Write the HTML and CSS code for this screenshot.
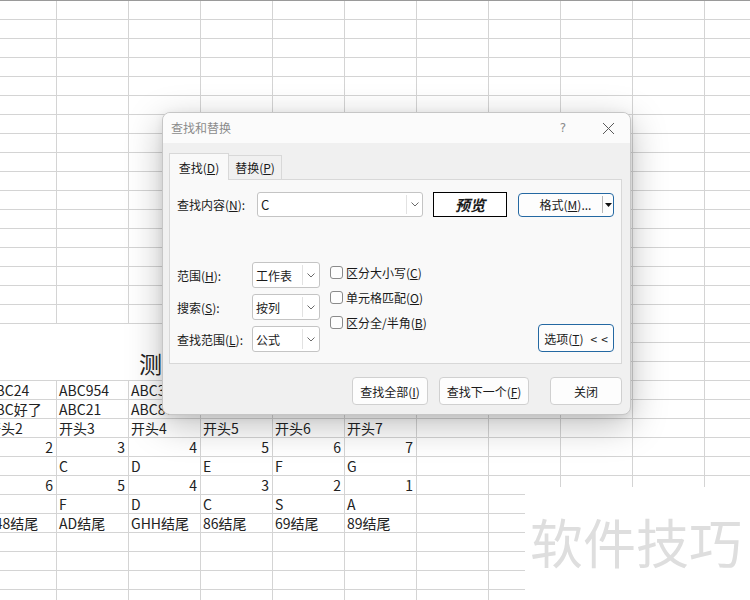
FILE: index.html
```html
<!DOCTYPE html>
<html lang="zh-CN">
<head>
<meta charset="utf-8">
<title>查找和替换</title>
<link rel="stylesheet" href="styles.css">
</head>
<body>
<div class="sheet">
  <div class="title-cell">测试数据表格</div>
  <div class="row"><div class="c first">ABC24</div><div class="c">ABC954</div><div class="c">ABC312</div><div class="c">ABC45</div><div class="c">ABC6</div><div class="c">ABC78</div></div>
  <div class="row"><div class="c first">ABC好了</div><div class="c">ABC21</div><div class="c">ABC876</div><div class="c">ABC5</div><div class="c">ABC99</div><div class="c">ABC1</div></div>
  <div class="row"><div class="c first">开头2</div><div class="c">开头3</div><div class="c">开头4</div><div class="c">开头5</div><div class="c">开头6</div><div class="c">开头7</div></div>
  <div class="row"><div class="c first n">2</div><div class="c n">3</div><div class="c n">4</div><div class="c n">5</div><div class="c n">6</div><div class="c n">7</div></div>
  <div class="row"><div class="c first">B</div><div class="c">C</div><div class="c">D</div><div class="c">E</div><div class="c">F</div><div class="c">G</div></div>
  <div class="row"><div class="c first n">6</div><div class="c n">5</div><div class="c n">4</div><div class="c n">3</div><div class="c n">2</div><div class="c n">1</div></div>
  <div class="row"><div class="c first">G</div><div class="c">F</div><div class="c">D</div><div class="c">C</div><div class="c">S</div><div class="c">A</div></div>
  <div class="row"><div class="c first">148结尾</div><div class="c">AD结尾</div><div class="c">GHH结尾</div><div class="c">86结尾</div><div class="c">69结尾</div><div class="c">89结尾</div></div>

  <div class="watermark">软件技巧</div>

  <div class="dialog">
    <div class="titlebar">
      <span class="title">查找和替换</span>
      <span class="help">?</span>
      <svg class="close" width="18" height="18" viewBox="0 0 18 18"><path d="M4 4 L15 15 M15 4 L4 15" stroke="#5a5a5a" stroke-width="1" fill="none"/></svg>
    </div>
    <div class="dbody">
      <div class="tabs">
        <div class="tab active">查找(<u>D</u>)</div>
        <div class="tab">替换(<u>P</u>)</div>
      </div>
      <div class="panel">
        <div class="find-row">
          <span class="lbl-find">查找内容(<u>N</u>):</span>
          <div class="combo input">
            <span class="val">C</span>
            <span class="arrow"><svg width="8" height="5" viewBox="0 0 8 5"><polyline points="0.5,0.5 4,4 7.5,0.5" fill="none" stroke="#6a6a6a" stroke-width="1"/></svg></span>
          </div>
          <div class="preview">预览</div>
          <div class="btn accent split">
            <span class="split-label">格式(<u>M</u>)...</span>
            <span class="split-sep"></span>
            <span class="split-drop"><svg width="7" height="4" viewBox="0 0 7 4"><polygon points="0,0 7,0 3.5,4" fill="#111"/></svg></span>
          </div>
        </div>
        <div class="opts">
          <div class="fields">
            <span class="lbl">范围(<u>H</u>):</span>
            <div class="combo sel"><span class="val">工作表</span><span class="arrow"><svg width="8" height="5" viewBox="0 0 8 5"><polyline points="0.5,0.5 4,4 7.5,0.5" fill="none" stroke="#6a6a6a" stroke-width="1"/></svg></span></div>
            <span class="lbl">搜索(<u>S</u>):</span>
            <div class="combo sel"><span class="val">按列</span><span class="arrow"><svg width="8" height="5" viewBox="0 0 8 5"><polyline points="0.5,0.5 4,4 7.5,0.5" fill="none" stroke="#6a6a6a" stroke-width="1"/></svg></span></div>
            <span class="lbl">查找范围(<u>L</u>):</span>
            <div class="combo sel"><span class="val">公式</span><span class="arrow"><svg width="8" height="5" viewBox="0 0 8 5"><polyline points="0.5,0.5 4,4 7.5,0.5" fill="none" stroke="#6a6a6a" stroke-width="1"/></svg></span></div>
          </div>
          <div class="checks">
            <div class="check"><span class="cb"></span>区分大小写(<u>C</u>)</div>
            <div class="check"><span class="cb"></span>单元格匹配(<u>O</u>)</div>
            <div class="check"><span class="cb"></span>区分全/半角(<u>B</u>)</div>
          </div>
          <div class="btn accent options">选项(<u>T</u>)<span class="chev">&lt;</span><span class="chev">&lt;</span></div>
        </div>
      </div>
      <div class="actions">
        <div class="btn b-all">查找全部(<u>I</u>)</div>
        <div class="btn b-next">查找下一个(<u>F</u>)</div>
        <div class="btn b-close">关闭</div>
      </div>
    </div>
  </div>
</div>
</body>
</html>
```

FILE: styles.css
```css
html, body {
  margin: 0;
  padding: 0;
  background: #fff;
}

.sheet {
  position: relative;
  width: 750px;
  height: 600px;
  overflow: hidden;
  background-color: #fff;
  background-image:
    linear-gradient(#9a9a9a, #9a9a9a),
    linear-gradient(to right, #d4d4d4 1px, transparent 1px),
    linear-gradient(to bottom, #d4d4d4 1px, transparent 1px);
  background-size: 100% 1px, 72px 100%, 100% 19px;
  background-position: 0 0, 56px 0, 0 0;
  background-repeat: no-repeat, repeat-x, repeat-y;
  font-family: "Noto Sans CJK SC", "Noto Sans", sans-serif;
  font-size: 14px;
  color: #222;
}

.title-cell {
  margin-top: 324px;
  width: 416px;
  height: 56px;
  box-sizing: border-box;
  background: #fff;
  display: flex;
  align-items: flex-end;
  justify-content: center;
  padding-bottom: 5px;
  font-size: 23px;
  line-height: 1;
  color: #222;
  white-space: nowrap;
}

.row {
  display: flex;
  height: 19px;
}

.c {
  flex: none;
  width: 72px;
  box-sizing: border-box;
  padding: 2px 3px 0;
  line-height: 17px;
  white-space: nowrap;
  overflow: hidden;
}

.c.first {
  margin-left: -16px;
}

.c.n {
  text-align: right;
}

.watermark {
  position: absolute;
  left: 525px;
  top: 487px;
  right: 0;
  bottom: 0;
  background: #fff;
  box-sizing: border-box;
  padding: 28px 0 0 5px;
  font-size: 53px;
  line-height: 1;
  color: #dedede;
  white-space: nowrap;
}

/* dialog */
.dialog {
  position: absolute;
  left: 162px;
  top: 112px;
  width: 469px;
  height: 303px;
  box-sizing: border-box;
  border: 1px solid #c6c6c6;
  border-radius: 8px;
  background: #f0f0f0;
  box-shadow: 0 10px 36px rgba(0, 0, 0, 0.26), 0 2px 8px rgba(0, 0, 0, 0.08);
  overflow: hidden;
  font-family: "Noto Sans CJK SC", "Noto Sans", sans-serif;
  font-size: 12px;
  color: #1a1a1a;
}

.titlebar {
  height: 30px;
  background: #fbfbfb;
  display: flex;
  align-items: center;
  padding: 0 13px 1px 8px;
  box-sizing: border-box;
}

.title {
  color: #8b8b8b;
}

.help {
  margin-left: auto;
  width: 20px;
  text-align: center;
  color: #8a8a8a;
  font-family: "DejaVu Sans", sans-serif;
  font-size: 12px;
}

.close {
  margin-left: 26px;
  display: block;
}

.dbody {
  padding: 10px 8px 0 6px;
}

u {
  text-underline-offset: 1px;
}

.tabs {
  display: flex;
  align-items: flex-end;
  height: 26px;
}

.tab {
  box-sizing: border-box;
  display: flex;
  align-items: center;
  justify-content: center;
  border: 1px solid #d8d8d8;
  border-bottom: none;
}

.tab.active {
  width: 60px;
  height: 27px;
  margin-bottom: -1px;
  background: #f9f9f9;
  position: relative;
  z-index: 1;
}

.tab:not(.active) {
  width: 53px;
  height: 24px;
  border-left: none;
  background: #f0f0f0;
}

.panel {
  height: 185px;
  box-sizing: border-box;
  border: 1px solid #d8d8d8;
  background: #f9f9f9;
  padding: 12px 7px 0 7px;
}

.find-row {
  display: flex;
  align-items: center;
  height: 25px;
}

.lbl-find {
  width: 80px;
  flex: none;
}

.combo {
  display: flex;
  box-sizing: border-box;
  background: #fff;
  border: 1px solid #c4c4c4;
  border-radius: 3px;
  flex: none;
}

.combo .val {
  flex: 1;
  display: flex;
  align-items: center;
  padding-left: 3px;
  white-space: nowrap;
}

.combo .arrow {
  display: flex;
  align-items: center;
  justify-content: center;
  border-left: 1px solid #e2e2e2;
  margin: 2px 0;
}

.combo.input {
  width: 166px;
  height: 25px;
}

.combo.input .val {
  font-size: 13px;
}

.combo.input .arrow {
  width: 15px;
}

.combo.sel {
  width: 68px;
  height: 26px;
}

.combo.sel .arrow {
  width: 16px;
}

.preview {
  margin-left: 10px;
  width: 74px;
  height: 25px;
  box-sizing: border-box;
  border: 1px solid #000;
  background: #fff;
  display: flex;
  align-items: center;
  justify-content: center;
  font-size: 15px;
  font-weight: bold;
  font-style: italic;
  flex: none;
}

.btn {
  box-sizing: border-box;
  height: 28px;
  border: 1px solid #d0d0d0;
  border-radius: 4px;
  background: #fdfdfd;
  display: flex;
  align-items: center;
  justify-content: center;
  white-space: nowrap;
  flex: none;
}

.btn.accent {
  border-color: #2468a2;
}

.split {
  margin-left: 11px;
  width: 96px;
  height: 24px;
  justify-content: flex-start;
}

.split-label {
  width: 83px;
  box-sizing: border-box;
  padding-left: 10px;
  text-align: center;
}

.split-sep {
  width: 1px;
  height: 17px;
  background: #b8b8b8;
}

.split-drop {
  flex: 1;
  display: flex;
  align-items: center;
  justify-content: center;
}

.opts {
  margin-top: 45px;
  display: flex;
  align-items: flex-start;
}

.fields {
  display: grid;
  grid-template-columns: 75px 68px;
  grid-auto-rows: 26px;
  row-gap: 6px;
  align-items: center;
}

.checks {
  margin-left: 10px;
  margin-top: -2px;
  display: flex;
  flex-direction: column;
}

.check {
  height: 25px;
  display: flex;
  align-items: center;
  white-space: nowrap;
}

.cb {
  width: 13px;
  height: 13px;
  box-sizing: border-box;
  border: 1px solid #8a8a8a;
  border-radius: 3px;
  background: #fdfdfd;
  margin-right: 3px;
}

.options {
  margin-left: auto;
  align-self: flex-end;
  width: 76px;
  height: 28px;
}

.options .chev {
  margin-left: 4px;
}

.options .chev:first-of-type {
  margin-left: 7px;
}

.actions {
  margin-top: 13px;
  display: flex;
  justify-content: flex-end;
}

.b-all {
  width: 76px;
}

.b-next {
  width: 90px;
  margin-left: 11px;
}

.b-close {
  width: 72px;
  margin-left: 21px;
}
```
